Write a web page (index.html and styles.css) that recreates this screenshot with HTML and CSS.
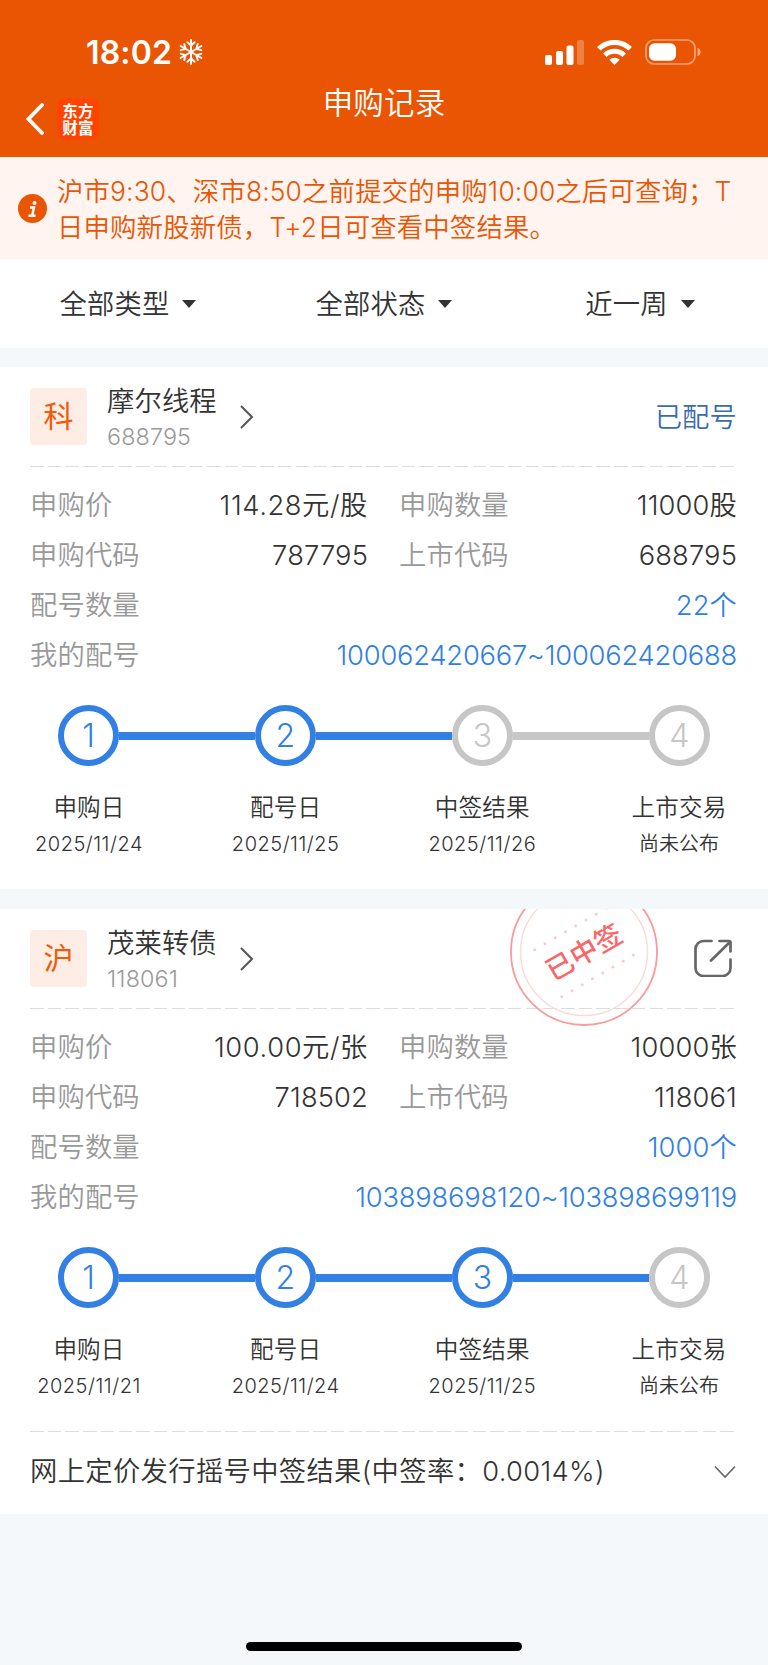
FILE: index.html
```html
<!DOCTYPE html>
<html lang="zh-CN">
<head>
    <meta charset="UTF-8">
    <meta name="viewport" content="width=device-width, initial-scale=1.0">
    <title>申购记录</title>
    <link rel="stylesheet" href="styles.css">
</head>
<body>
    <header class="header">
        <div class="status-bar">
            <div class="clock">
                <span class="time">18:02</span>
                <svg class="snow" width="24" height="26" viewBox="0 0 24 26" fill="none" stroke="#fff" stroke-width="2" stroke-linecap="round">
                    <g id="arm"><path d="M12 13V1M8.5 3.2L12 6.7l3.5-3.5"/></g>
                    <use href="#arm" transform="rotate(60 12 13)"/>
                    <use href="#arm" transform="rotate(120 12 13)"/>
                    <use href="#arm" transform="rotate(180 12 13)"/>
                    <use href="#arm" transform="rotate(240 12 13)"/>
                    <use href="#arm" transform="rotate(300 12 13)"/>
                </svg>
            </div>
            <div class="system-icons">
                <svg width="39" height="25" viewBox="0 0 39 25" fill="#fff">
                    <rect x="0" y="15" width="7" height="10" rx="2"/>
                    <rect x="11" y="11" width="7" height="14" rx="2"/>
                    <rect x="21.5" y="5.5" width="7" height="19.5" rx="2"/>
                    <rect x="32" y="0" width="7" height="25" rx="2" opacity=".25"/>
                </svg>
                <svg class="wifi" width="35" height="25" viewBox="0 0 35 25" fill="none" stroke="#fff" stroke-width="5">
                    <path d="M1.8 8.8a22.5 22.5 0 0 1 31.4 0"/>
                    <path d="M7.8 15.2a14 14 0 0 1 19.4 0"/>
                    <path d="M12.3 19.8a7.5 7.5 0 0 1 10.4 0L17.5 25z" fill="#fff" stroke="none"/>
                </svg>
                <svg width="57" height="26" viewBox="0 0 57 26">
                    <rect x="1" y="1" width="49" height="24" rx="8" fill="none" stroke="#fff" stroke-width="1.7" opacity=".45"/>
                    <rect x="4" y="4.3" width="27" height="17.4" rx="5.5" fill="#fff"/>
                    <path d="M52.5 9c4.2 1 4.2 7 0 8z" fill="#fff" opacity=".5"/>
                </svg>
            </div>
        </div>
        <div class="nav">
            <div class="nav-left">
                <svg width="18" height="32" viewBox="0 0 18 32" fill="none" stroke="#fff" stroke-width="3.8" stroke-linecap="round">
                    <path d="M16 2L2.5 16 16 30"/>
                </svg>
                <div class="logo">东方<br>财富</div>
            </div>
            <h1>申购记录</h1>
        </div>
    </header>

    <div class="notice">
        <svg width="29" height="29" viewBox="0 0 29 29">
            <circle cx="14.5" cy="14.5" r="14.5" fill="#ea5504"/>
            <circle cx="16.5" cy="9" r="2" fill="#fff"/>
            <path d="M12 13.5h4l-1.8 8M10.5 21.7h7" fill="none" stroke="#fff" stroke-width="2.4"/>
        </svg>
        <p>沪市9:30、深市8:50之前提交的申购10:00之后可查询；T<br>日申购新股新债，T+2日可查看中签结果。</p>
    </div>

    <div class="filters">
        <div class="filter">全部类型<i class="caret"></i></div>
        <div class="filter">全部状态<i class="caret"></i></div>
        <div class="filter">近一周<i class="caret"></i></div>
    </div>

    <section class="card">
        <div class="card-head">
            <div class="market">科</div>
            <div class="stock">
                <div class="stock-name">摩尔线程</div>
                <div class="stock-code">688795</div>
            </div>
            <svg class="arrow" width="14" height="26" viewBox="0 0 14 26" fill="none" stroke="#555" stroke-width="2">
                <path d="M1 2l11 11L1 24"/>
            </svg>
            <div class="state">已配号</div>
        </div>
        <div class="dash"></div>
        <div class="info">
            <div class="row">
                <div class="cell"><span class="label">申购价</span><span class="value price">114.28元/股</span></div>
                <div class="cell"><span class="label">申购数量</span><span class="value">11000股</span></div>
            </div>
            <div class="row">
                <div class="cell"><span class="label">申购代码</span><span class="value">787795</span></div>
                <div class="cell"><span class="label">上市代码</span><span class="value">688795</span></div>
            </div>
            <div class="row"><span class="label">配号数量</span><span class="value link">22个</span></div>
            <div class="row"><span class="label">我的配号</span><span class="value link range">100062420667~100062420688</span></div>
        </div>
        <div class="track">
            <span class="dot done">1</span><span class="line done"></span>
            <span class="dot done">2</span><span class="line done"></span>
            <span class="dot">3</span><span class="line"></span>
            <span class="dot">4</span>
        </div>
        <div class="steps">
            <div class="step"><div class="step-name">申购日</div><div class="step-date">2025/11/24</div></div>
            <div class="step"><div class="step-name">配号日</div><div class="step-date">2025/11/25</div></div>
            <div class="step"><div class="step-name">中签结果</div><div class="step-date">2025/11/26</div></div>
            <div class="step"><div class="step-name">上市交易</div><div class="step-date none">尚未公布</div></div>
        </div>
    </section>

    <section class="card">
        <div class="card-head">
            <div class="market">沪</div>
            <div class="stock">
                <div class="stock-name">茂莱转债</div>
                <div class="stock-code">118061</div>
            </div>
            <svg class="arrow" width="14" height="26" viewBox="0 0 14 26" fill="none" stroke="#555" stroke-width="2">
                <path d="M1 2l11 11L1 24"/>
            </svg>
            <svg class="share" width="38" height="38" viewBox="0 0 38 38" fill="none" stroke="#666" stroke-width="2.7" stroke-linecap="round" stroke-linejoin="round">
                <path d="M17.500 2H9.500A8 8 0 0 0 1.500 10v19a8 8 0 0 0 8 8h19a8 8 0 0 0 8-8v-8.500M25.500 2h9.500a1.500 1.500 0 0 1 1.500 1.500V12.500M36 3L17 21.500"/>
            </svg>
        </div>
        <div class="dash"></div>
        <!-- 中签印章 -->
        <div class="stamp">
            <svg width="148" height="148" viewBox="-74 -74 148 148" fill="none">
                <circle r="73" stroke="#f99a9b" stroke-width="1.8"/>
                <circle r="63.5" stroke="#fcdada" stroke-width="1.4"/>
                <g stroke="#fbc9c9" stroke-width="3" stroke-linecap="round" stroke-dasharray="0 11.85">
                    <path d="M-49.3-2.3L25-45.4"/>
                    <path d="M-22.3 44.7L52 1.6"/>
                </g>
            </svg>
            <span>已中签</span>
        </div>
        <div class="info">
            <div class="row">
                <div class="cell"><span class="label">申购价</span><span class="value price">100.00元/张</span></div>
                <div class="cell"><span class="label">申购数量</span><span class="value">10000张</span></div>
            </div>
            <div class="row">
                <div class="cell"><span class="label">申购代码</span><span class="value">718502</span></div>
                <div class="cell"><span class="label">上市代码</span><span class="value">118061</span></div>
            </div>
            <div class="row"><span class="label">配号数量</span><span class="value link">1000个</span></div>
            <div class="row"><span class="label">我的配号</span><span class="value link range">103898698120~103898699119</span></div>
        </div>
        <div class="track">
            <span class="dot done">1</span><span class="line done"></span>
            <span class="dot done">2</span><span class="line done"></span>
            <span class="dot done">3</span><span class="line done"></span>
            <span class="dot">4</span>
        </div>
        <div class="steps">
            <div class="step"><div class="step-name">申购日</div><div class="step-date">2025/11/21</div></div>
            <div class="step"><div class="step-name">配号日</div><div class="step-date">2025/11/24</div></div>
            <div class="step"><div class="step-name">中签结果</div><div class="step-date">2025/11/25</div></div>
            <div class="step"><div class="step-name">上市交易</div><div class="step-date none">尚未公布</div></div>
        </div>
        <div class="dash"></div>
        <div class="result">
            <span>网上定价发行摇号中签结果(中签率：0.0014%)</span>
            <svg width="22" height="14" viewBox="0 0 22 14" fill="none" stroke="#666" stroke-width="1.6">
                <path d="M1 1.5l10 10.5L21 1.5"/>
            </svg>
        </div>
    </section>

    <div class="home-bar"></div>
</body>
</html>
```
FILE: styles.css
```css
* {
    box-sizing: border-box;
}

body {
    margin: 0;
    height: 1665px;
    display: flex;
    flex-direction: column;
    background-color: #f4f8fa;
    color: #333;
    font-family: Inter, "Noto Sans CJK SC", sans-serif;
    font-size: 27.3px;
    font-weight: 350;
    letter-spacing: 0.15px;
    line-height: 40px;
    white-space: nowrap;
}

svg {
    display: block;
    flex: none;
}

.header {
    height: 157px;
    background-color: #ea5504;
    color: #fff;
}

.status-bar {
    display: flex;
    justify-content: space-between;
    align-items: center;
    height: 78px;
    padding: 26px 66px 0 86px;
}

.clock {
    display: flex;
    align-items: center;
    gap: 7px;
}

.time {
    padding-top: 2px;
    font-size: 32px;
    font-weight: 600;
}

.system-icons {
    display: flex;
    align-items: center;
}

.wifi {
    margin: 0 13px;
}

.nav {
    display: grid;
    grid-template-columns: 1fr auto 1fr;
}

.nav-left {
    display: flex;
    align-items: center;
    gap: 13px;
    height: 42px;
    margin-top: 20px;
    padding-left: 26px;
}

.logo {
    width: 42px;
    height: 42px;
    padding-top: 4px;
    border-radius: 8px;
    background-color: #ff4400;
    font-family: "Noto Sans CJK SC", sans-serif;
    font-size: 15.5px;
    font-weight: 700;
    line-height: 17px;
    text-align: center;
}

h1 {
    margin: 5px 0 0;
    font-size: 30.5px;
    font-weight: 350;
    line-height: 40px;
}

.notice {
    display: flex;
    align-items: center;
    height: 102px;
    padding-left: 18px;
    background-color: #fff4ef;
    color: #ea5504;
}

.notice p {
    margin: 1px 0 0 10px;
    font-size: 26.4px;
    line-height: 36px;
}

.filters {
    display: grid;
    grid-template-columns: repeat(3, 1fr);
    height: 89px;
    padding-top: 2px;
    background-color: #fff;
}

.filter {
    display: flex;
    align-items: center;
    justify-content: center;
    gap: 13px;
}

.caret {
    margin-bottom: 2px;
    border: 7px solid transparent;
    border-top: 8px solid #333;
    border-bottom: 0;
}

.card {
    position: relative;
    margin-top: 19px;
    background-color: #fff;
    overflow: hidden;
}

.card + .card {
    margin-top: 20px;
}

.card-head {
    display: flex;
    align-items: center;
    height: 99px;
    padding: 0 31px 0 30px;
}

.market {
    width: 57px;
    height: 57px;
    margin-right: 20px;
    border-radius: 4px;
    background-color: #fdede5;
    color: #f25a0a;
    font-size: 30px;
    font-weight: 400;
    line-height: 56px;
    text-align: center;
}

.stock {
    padding-top: 2px;
}

.stock-name {
    line-height: 38px;
}

.stock-code {
    color: #999;
    font-size: 23.3px;
    line-height: 32px;
}

.arrow {
    margin-left: 23px;
}

.state {
    margin-left: auto;
    padding-top: 2px;
    color: #3a6cb0;
}

.share {
    margin: -2px 5px 0 auto;
}

.dash {
    height: 1px;
    margin: 0 34px 0 30px;
    background: repeating-linear-gradient(90deg, #ddd 0 13.5px, transparent 13.5px 17.7px);
}

.info {
    padding: 14px 31px 0 30px;
}

.row {
    display: flex;
    justify-content: space-between;
    line-height: 50px;
}

.cell {
    display: flex;
    justify-content: space-between;
    width: 338px;
}

.label {
    color: #999;
}

.price {
    letter-spacing: 0.6px;
}

.link {
    color: #2f80e6;
}

.range {
    letter-spacing: -0.2px;
}

.track {
    display: flex;
    align-items: center;
    padding: 24px 58px 0;
}

.dot {
    width: 61px;
    height: 61px;
    border: 6px solid #c6c6c6;
    border-radius: 50%;
    color: #c6c6c6;
    font-size: 32px;
    font-weight: 300;
    line-height: 49px;
    text-align: center;
}

.line {
    flex: 1;
    height: 8px;
    background-color: #c6c6c6;
}

.dot.done {
    border-color: #3280e4;
    color: #3280e4;
}

.line.done {
    background-color: #3280e4;
}

.steps {
    display: flex;
    justify-content: space-between;
    height: 123px;
    padding: 24px 30px 0;
}

.step {
    width: 118px;
    text-align: center;
}

.step-name {
    font-size: 23.6px;
    line-height: 36px;
}

.step-date {
    font-size: 20px;
    letter-spacing: 0.5px;
    line-height: 36px;
}

.step-date.none {
    letter-spacing: 0;
}

/* 盖在卡片右上角，超出部分裁掉 */
.stamp {
    position: absolute;
    top: -31px;
    left: 510px;
}

.stamp span {
    position: absolute;
    inset: 0;
    color: #f8686b;
    font-size: 27.5px;
    font-weight: 500;
    line-height: 148px;
    text-align: center;
    transform: rotate(-30deg);
}

.result {
    display: flex;
    justify-content: space-between;
    align-items: center;
    height: 82px;
    padding: 0 32px 2px 30px;
    letter-spacing: 0.35px;
}

.home-bar {
    width: 276px;
    height: 9px;
    margin: auto auto 14px;
    border-radius: 5px;
    background-color: #000;
}
```
